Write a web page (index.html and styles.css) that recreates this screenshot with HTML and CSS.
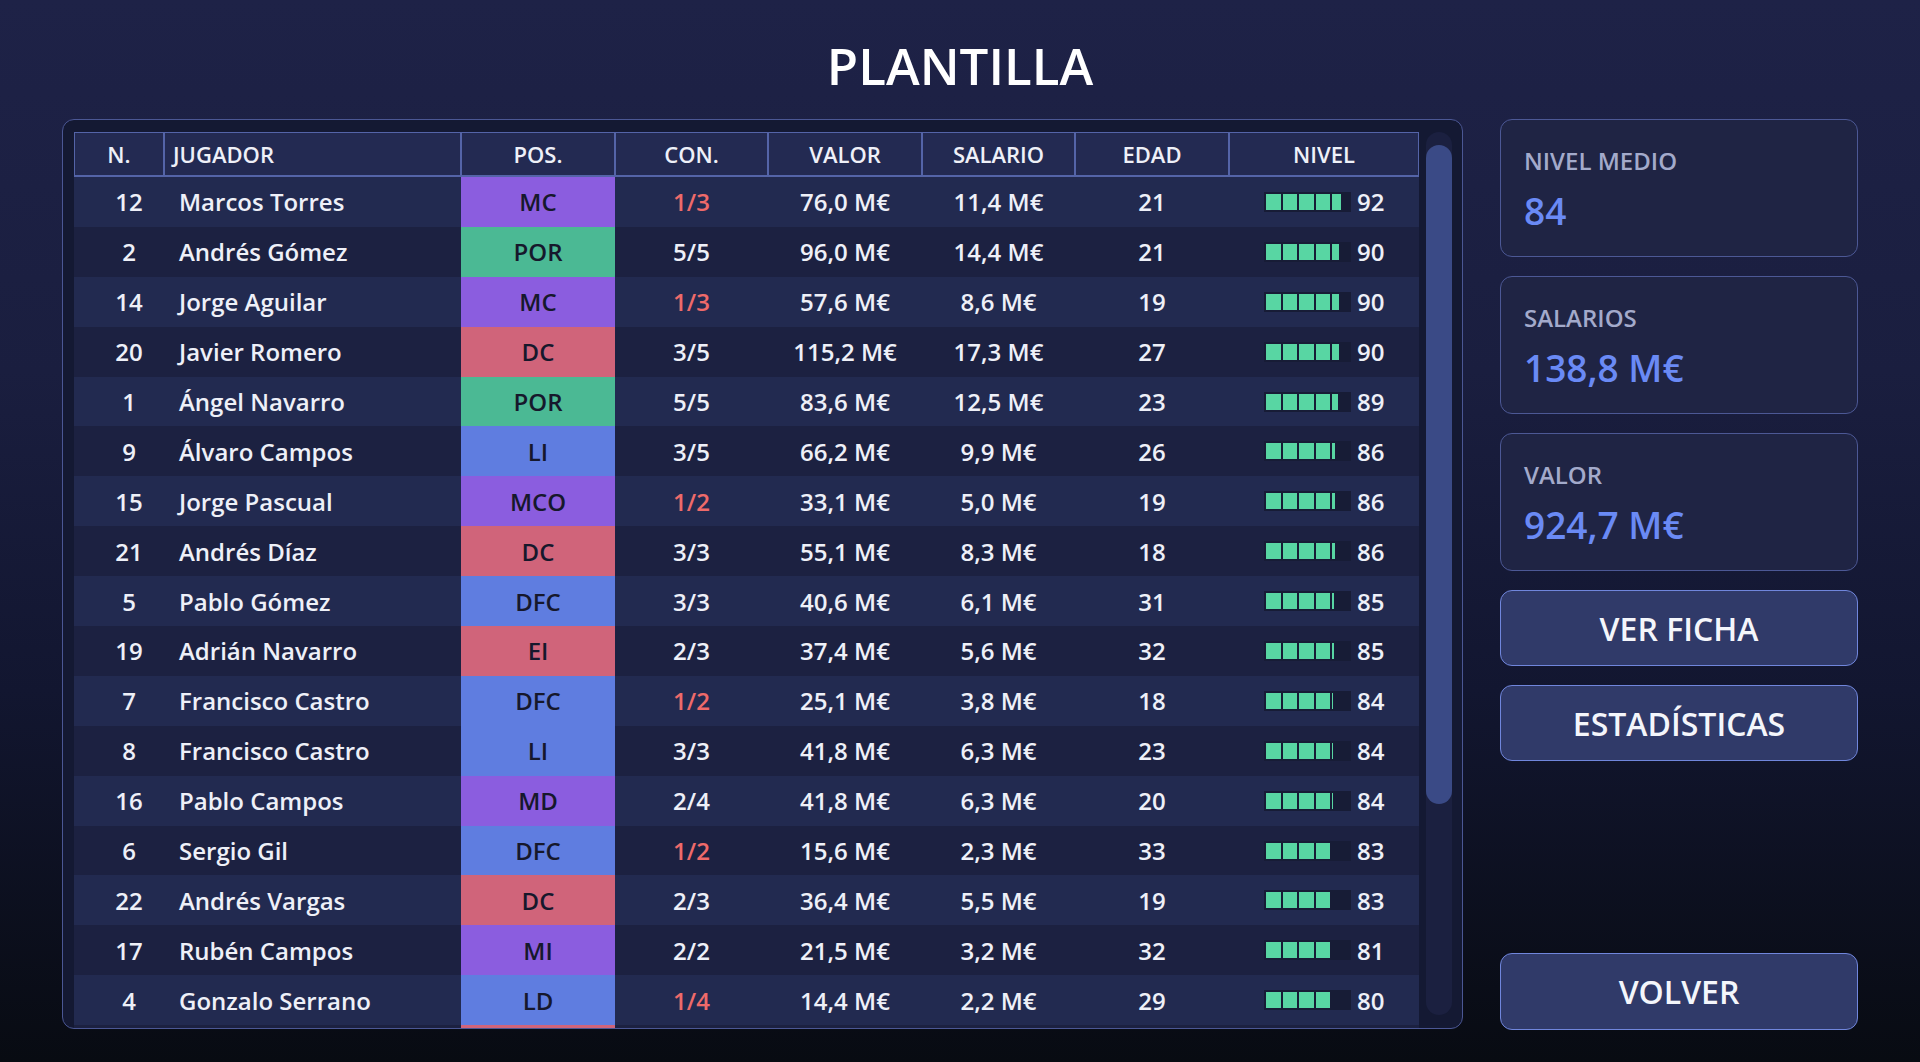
FILE: index.html
```html
<!DOCTYPE html>
<html lang="es">
<head>
    <meta charset="UTF-8">
    <meta name="viewport" content="width=device-width, initial-scale=1.0">
    <title>Plantilla</title>
    <link rel="stylesheet" href="styles.css">
</head>
<body>
    <h1 class="title">PLANTILLA</h1>

    <div class="layout">
        <section class="squad-panel">
            <div class="table-wrap">
                <table class="squad">
                    <colgroup>
                        <col style="width:90px"><col style="width:297px"><col style="width:154px"><col style="width:153px">
                        <col style="width:154px"><col style="width:153px"><col style="width:154px"><col style="width:190px">
                    </colgroup>
                    <thead>
                        <tr>
                            <th>N.</th>
                            <th class="name-head">JUGADOR</th>
                            <th>POS.</th>
                            <th>CON.</th>
                            <th>VALOR</th>
                            <th>SALARIO</th>
                            <th>EDAD</th>
                            <th>NIVEL</th>
                        </tr>
                    </thead>
                    <tbody id="squadBody"></tbody>
                </table>
            </div>
            <div class="scroll-track"><div class="scroll-thumb"></div></div>
        </section>

        <aside class="side">
            <div class="stat-card">
                <div class="stat-label">NIVEL MEDIO</div>
                <div class="stat-value">84</div>
            </div>
            <div class="stat-card">
                <div class="stat-label">SALARIOS</div>
                <div class="stat-value">138,8 M€</div>
            </div>
            <div class="stat-card">
                <div class="stat-label">VALOR</div>
                <div class="stat-value">924,7 M€</div>
            </div>
            <button class="action">VER FICHA</button>
            <button class="action">ESTADÍSTICAS</button>
            <button class="action back">VOLVER</button>
        </aside>
    </div>

    <script>
        const jugadores = [
            [12, 'Marcos Torres', 'MC', '1/3', '76,0 M€', '11,4 M€', 21, 92],
            [2, 'Andrés Gómez', 'POR', '5/5', '96,0 M€', '14,4 M€', 21, 90],
            [14, 'Jorge Aguilar', 'MC', '1/3', '57,6 M€', '8,6 M€', 19, 90],
            [20, 'Javier Romero', 'DC', '3/5', '115,2 M€', '17,3 M€', 27, 90],
            [1, 'Ángel Navarro', 'POR', '5/5', '83,6 M€', '12,5 M€', 23, 89],
            [9, 'Álvaro Campos', 'LI', '3/5', '66,2 M€', '9,9 M€', 26, 86],
            [15, 'Jorge Pascual', 'MCO', '1/2', '33,1 M€', '5,0 M€', 19, 86],
            [21, 'Andrés Díaz', 'DC', '3/3', '55,1 M€', '8,3 M€', 18, 86],
            [5, 'Pablo Gómez', 'DFC', '3/3', '40,6 M€', '6,1 M€', 31, 85],
            [19, 'Adrián Navarro', 'EI', '2/3', '37,4 M€', '5,6 M€', 32, 85],
            [7, 'Francisco Castro', 'DFC', '1/2', '25,1 M€', '3,8 M€', 18, 84],
            [8, 'Francisco Castro', 'LI', '3/3', '41,8 M€', '6,3 M€', 23, 84],
            [16, 'Pablo Campos', 'MD', '2/4', '41,8 M€', '6,3 M€', 20, 84],
            [6, 'Sergio Gil', 'DFC', '1/2', '15,6 M€', '2,3 M€', 33, 83],
            [22, 'Andrés Vargas', 'DC', '2/3', '36,4 M€', '5,5 M€', 19, 83],
            [17, 'Rubén Campos', 'MI', '2/2', '21,5 M€', '3,2 M€', 32, 81],
            [4, 'Gonzalo Serrano', 'LD', '1/4', '14,4 M€', '2,2 M€', 29, 80],
            [11, 'Diego Morales', 'DC', '2/4', '18,2 M€', '2,7 M€', 24, 79]
        ];

        const colorPos = {
            POR: 'pos-gk',
            DFC: 'pos-def', LI: 'pos-def', LD: 'pos-def',
            MC: 'pos-mid', MCO: 'pos-mid', MD: 'pos-mid', MI: 'pos-mid',
            DC: 'pos-att', EI: 'pos-att', ED: 'pos-att'
        };

        // la barra se llena por bloques de 20 puntos
        function anchoNivel(nivel) {
            const bloques = Math.floor(nivel / 20);
            const resto = Math.max(0, (nivel % 20) - 3) / 17;
            return (bloques + resto) * 20;
        }

        const tbody = document.getElementById('squadBody');
        jugadores.forEach(([num, nombre, pos, con, valor, salario, edad, nivel]) => {
            const conClass = con.startsWith('1/') ? 'con low' : 'con';
            const row = document.createElement('tr');
            row.innerHTML = `
                <td class="num">${num}</td>
                <td class="name">${nombre}</td>
                <td class="pos ${colorPos[pos]}">${pos}</td>
                <td class="${conClass}">${con}</td>
                <td>${valor}</td>
                <td>${salario}</td>
                <td>${edad}</td>
                <td><div class="level"><div class="bar"><div class="fill" style="width:${anchoNivel(nivel)}%"></div></div><span>${nivel}</span></div></td>`;
            tbody.appendChild(row);
        });
    </script>
</body>
</html>
```

FILE: styles.css
```css
html {
    background: linear-gradient(180deg, #1e2247 0%, #1a1e3f 35%, #121630 65%, #080b12 100%);
    min-height: 100%;
}
body {
    font-family: "Open Sans", "Noto Sans", sans-serif;
    font-weight: 600;
    color: #eef0f8;
    margin: 0;
    padding: 30px 62px 0;
    height: 1062px;
    box-sizing: border-box;
    overflow: hidden;
}
.title {
    margin: 0 0 18px;
    font-size: 51px;
    line-height: 71px;
    font-weight: 600;
    text-align: center;
    color: #ffffff;
}
.layout {
    display: flex;
    gap: 37px;
    height: 911px;
}

/* tabla */
.squad-panel {
    display: flex;
    gap: 7px;
    width: 1401px;
    height: 910px;
    box-sizing: border-box;
    padding: 12px 10px 0 11px;
    background-color: #141933;
    border: 1px solid #4b5794;
    border-radius: 12px;
    overflow: hidden;
}
.table-wrap {
    width: 1345px;
    flex: none;
    overflow: hidden;
}
.squad {
    width: 1345px;
    table-layout: fixed;
    border-collapse: separate;
    border-spacing: 0;
    font-size: 24px;
}
.squad th {
    height: 42px;
    padding: 0;
    font-size: 22px;
    font-weight: 600;
    color: #eef0f8;
    background-color: #232a52;
    border: 1px solid #5464a8;
    border-bottom-width: 2px;
    text-align: center;
}
.squad th.name-head {
    text-align: left;
    padding-left: 8px;
}
.squad td {
    height: 49.9px;
    padding: 0;
    text-align: center;
    white-space: nowrap;
}
.squad tbody tr:nth-child(odd) td {
    background-color: #222a50;
}
.squad tbody tr:nth-child(even) td {
    background-color: #1c2141;
}
.squad td.num {
    padding-left: 20px;
}
.squad td.name {
    text-align: left;
    padding-left: 15px;
}
.squad td.pos {
    color: #16182c;
}
.squad tbody tr td.pos-gk { background-color: #4bb994; }
.squad tbody tr td.pos-def { background-color: #5f7de0; }
.squad tbody tr td.pos-mid { background-color: #8b5ddf; }
.squad tbody tr td.pos-att { background-color: #d0647a; }
.con.low {
    color: #ef6a6a;
}
.level {
    display: flex;
    align-items: center;
    justify-content: center;
    gap: 6px;
}
.bar {
    width: 87px;
    height: 20px;
    padding: 2px;
    box-sizing: border-box;
    background-color: #171c36;
}
.fill {
    height: 100%;
    background: repeating-linear-gradient(90deg, #58d6a3 0 14.6px, transparent 14.6px 16.6px);
}
.level span {
    width: 27px;
    text-align: left;
}

.scroll-track {
    width: 26px;
    flex: none;
    height: 883px;
    padding-top: 13px;
    box-sizing: border-box;
    background-color: #1b2040;
    border-radius: 13px;
}
.scroll-thumb {
    height: 659px;
    background-color: #3a4a86;
    border-radius: 13px;
}

/* columna derecha */
.side {
    width: 358px;
    display: flex;
    flex-direction: column;
    gap: 19px;
}
.stat-card {
    height: 138px;
    box-sizing: border-box;
    padding: 24px 24px 0 23px;
    background-color: #1f2444;
    border: 1px solid #4c5895;
    border-radius: 12px;
}
.stat-label {
    font-size: 24px;
    color: #a3aacb;
    margin-bottom: 8px;
}
.stat-value {
    font-size: 37px;
    color: #6a8af5;
}
.action {
    height: 76px;
    flex: none;
    font-family: inherit;
    font-size: 32px;
    font-weight: 600;
    color: #f4f6fb;
    background-color: #303a69;
    border: 1px solid #7086dc;
    border-radius: 12px;
    cursor: pointer;
}
.action:hover {
    background-color: #38437a;
}
.action.back {
    margin-top: auto;
    height: 77px;
}
```
